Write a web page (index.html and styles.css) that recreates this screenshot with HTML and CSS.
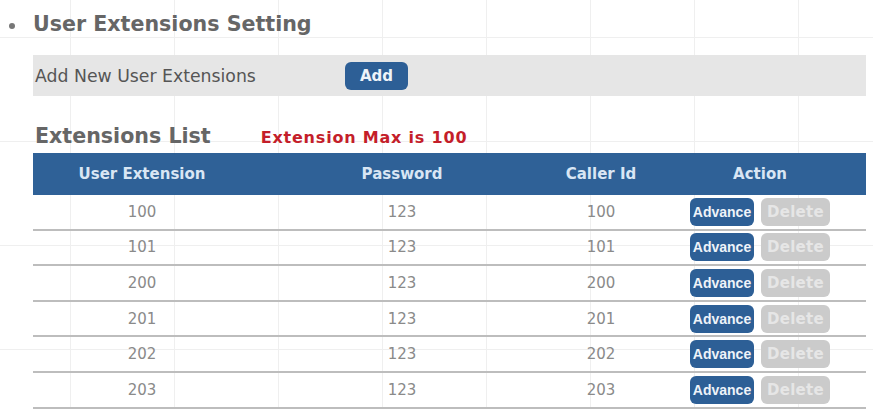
FILE: index.html
```html
<!DOCTYPE html>
<html lang="en">
<head>
    <meta charset="UTF-8">
    <meta name="viewport" content="width=device-width, initial-scale=1.0">
    <title>User Extensions Setting</title>
    <link rel="stylesheet" href="styles.css">
</head>
<body>
    <div class="page">
        <h2 class="section-title">User Extensions Setting</h2>

        <div class="add-bar">
            <span class="add-label">Add New User Extensions</span>
            <button class="btn btn-add">Add</button>
        </div>

        <div class="list-head">
            <h3 class="list-title">Extensions List</h3>
            <span class="list-max">Extension Max is 100</span>
        </div>

        <table class="ext-table">
            <colgroup>
                <col class="col-ext">
                <col class="col-pass">
                <col class="col-caller">
                <col class="col-action">
            </colgroup>
            <thead>
                <tr>
                    <th>User Extension</th>
                    <th>Password</th>
                    <th>Caller Id</th>
                    <th class="cell-action">Action</th>
                </tr>
            </thead>
            <tbody>
                <tr>
                    <td>100</td><td>123</td><td>100</td>
                    <td class="cell-action"><div class="actions"><button class="btn btn-advance">Advance</button><button class="btn btn-delete">Delete</button></div></td>
                </tr>
                <tr>
                    <td>101</td><td>123</td><td>101</td>
                    <td class="cell-action"><div class="actions"><button class="btn btn-advance">Advance</button><button class="btn btn-delete">Delete</button></div></td>
                </tr>
                <tr>
                    <td>200</td><td>123</td><td>200</td>
                    <td class="cell-action"><div class="actions"><button class="btn btn-advance">Advance</button><button class="btn btn-delete">Delete</button></div></td>
                </tr>
                <tr>
                    <td>201</td><td>123</td><td>201</td>
                    <td class="cell-action"><div class="actions"><button class="btn btn-advance">Advance</button><button class="btn btn-delete">Delete</button></div></td>
                </tr>
                <tr>
                    <td>202</td><td>123</td><td>202</td>
                    <td class="cell-action"><div class="actions"><button class="btn btn-advance">Advance</button><button class="btn btn-delete">Delete</button></div></td>
                </tr>
                <tr>
                    <td>203</td><td>123</td><td>203</td>
                    <td class="cell-action"><div class="actions"><button class="btn btn-advance">Advance</button><button class="btn btn-delete">Delete</button></div></td>
                </tr>
            </tbody>
        </table>
    </div>
</body>
</html>
```

FILE: styles.css
```css
body {
    margin: 0;
    min-height: 100vh;
    font-family: "DejaVu Sans", Verdana, sans-serif;
    color: #555;
    background-color: #fff;
    /* faint paper grid behind the page */
    background-image:
        linear-gradient(to right, #efefef 1px, transparent 1px),
        linear-gradient(to bottom, #efefef 1px, transparent 1px);
    background-size: 104px 104px;
    background-position: 70px 37px;
}
.page {
    padding: 11px 7px 0 33px;
}
.section-title {
    display: flex;
    align-items: center;
    gap: 18px;
    margin: 0 0 18px -24px;
    font-size: 20.6px;
    line-height: 26px;
    font-weight: bold;
    color: #666;
}
.section-title::before {
    content: "";
    width: 6px;
    height: 6px;
    margin-top: 3px;
    border-radius: 50%;
    background-color: #777;
}
.add-bar {
    display: flex;
    align-items: center;
    height: 41px;
    padding-left: 2px;
    background-color: #e6e6e6;
}
.add-label {
    width: 310px;
    font-size: 17.3px;
    color: #555;
}
.btn {
    padding: 0;
    border: none;
    border-radius: 6px;
    font-family: inherit;
    font-weight: bold;
    cursor: pointer;
}
.btn-add {
    width: 63px;
    height: 28px;
    background-color: #2d5f96;
    color: #eef3f9;
    font-size: 15px;
}
.list-head {
    display: flex;
    align-items: baseline;
    gap: 50px;
    margin: 27px 0 4px 2px;
}
.list-title {
    margin: 0;
    font-size: 20.6px;
    line-height: 26px;
    font-weight: bold;
    color: #666;
}
.list-max {
    font-size: 16px;
    letter-spacing: 0.8px;
    font-weight: bold;
    color: #c41e2a;
}
.ext-table {
    width: 100%;
    border-collapse: collapse;
    table-layout: fixed;
}
.col-ext {
    width: 218px;
}
.col-pass {
    width: 302px;
}
.col-caller {
    width: 96px;
}
.col-action {
    width: 217px;
}
.ext-table th {
    height: 42px;
    padding: 0;
    background-color: #2f6197;
    color: #d9e6f4;
    font-size: 15px;
    font-weight: bold;
}
.ext-table td {
    height: 33.6px;
    padding: 0;
    border-bottom: 2px solid #bdbdbd;
    text-align: center;
    font-size: 15px;
    color: #8a8a8a;
}
.ext-table .cell-action {
    padding-left: 5px;
}
.actions {
    display: flex;
    justify-content: center;
    gap: 7px;
}
.btn-advance {
    width: 64px;
    height: 28px;
    background-color: #2d5f96;
    color: #eef3f9;
    font-family: "Liberation Sans", Arial, sans-serif;
    font-size: 14px;
}
.btn-delete {
    width: 69px;
    height: 28px;
    background-color: #cbcbcb;
    color: #e6e6e6;
    font-size: 15px;
    letter-spacing: 0.3px;
}
```
